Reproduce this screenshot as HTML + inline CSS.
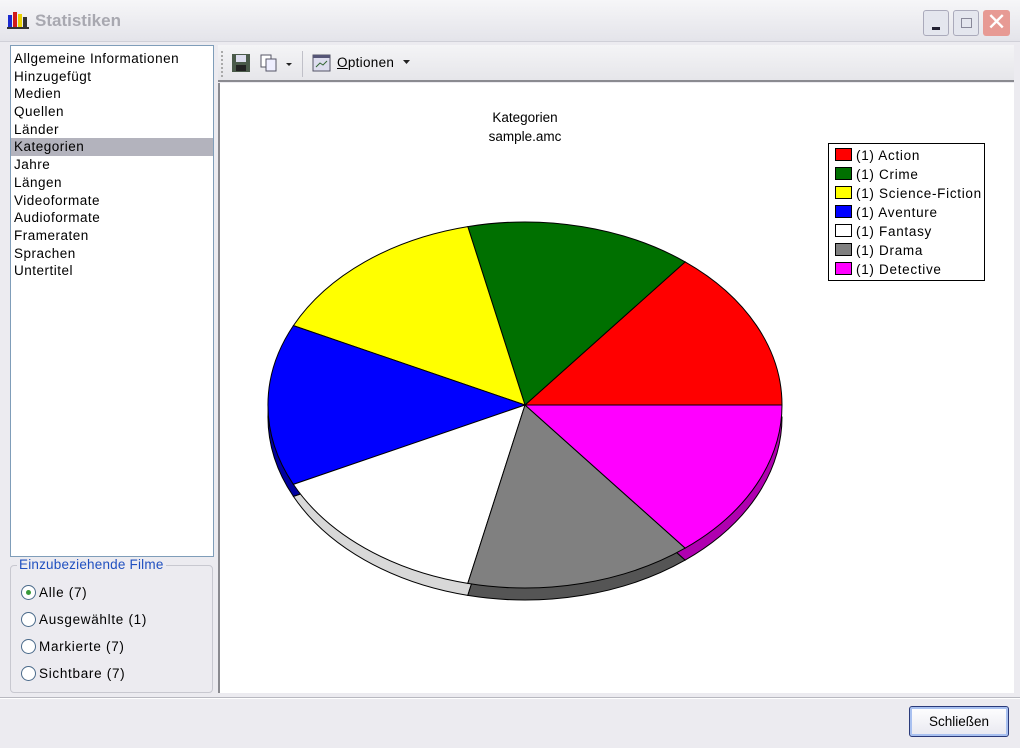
<!DOCTYPE html>
<html><head><meta charset="utf-8"><style>
*{margin:0;padding:0;box-sizing:border-box}
body{width:1020px;height:748px;overflow:hidden;background:#ecebf0;font-family:"Liberation Sans",sans-serif;font-size:13px;color:#000;position:relative}
.abs{position:absolute}
#title{left:0;top:0;width:1020px;height:42px;background:linear-gradient(#f6f6f8,#e4e4ea);border-bottom:1px solid #d0d0d8}
#list{left:10px;top:45px;width:204px;height:512px;background:#fff;border:1px solid #7f9db9}
#list div{height:17.7px;line-height:17.7px;padding-left:3px;font-size:13.5px;letter-spacing:0.5px}
#list .sel{background:#b3b3bd}
#grp{left:10px;top:565px;width:203px;height:128px;border:1px solid #c8c8d0;border-radius:4px}
.rad{position:absolute;left:10px;font-size:13.5px;line-height:16px;letter-spacing:0.7px}
.rad i{display:inline-block;width:15px;height:15px;border:1px solid #4a6a8a;border-radius:50%;background:#fff;vertical-align:-3px;margin-right:3px;position:relative}
.rad i.on:after{content:"";position:absolute;left:4px;top:4px;width:5px;height:5px;border-radius:50%;background:#3a9a3a}
#tb{left:218px;top:45px;width:796px;height:37px;background:linear-gradient(#f4f4f6,#e6e6ea);border-bottom:2px solid #8a8a90}
#chart{left:218px;top:83px;width:796px;height:610px;background:#fff;border-left:2px solid #8a8a90}
</style></head><body>
<div id="title" class="abs">
 <svg class="abs" style="left:7px;top:10px" width="22" height="20"><rect x="1" y="5" width="4" height="13" fill="#1a2ad0"/><rect x="6" y="2" width="4" height="16" fill="#d01a1a"/><rect x="11" y="4" width="4" height="14" fill="#e8d000"/><rect x="16" y="7" width="4" height="11" fill="#333"/><rect x="0" y="17" width="22" height="2" fill="#333"/></svg>
 <div class="abs" style="left:35px;top:11px;font-size:17px;font-weight:bold;color:#a8a8b0">Statistiken</div>
 <div class="abs" style="left:923px;top:10px;width:26px;height:26px;border:1px solid #aab;border-radius:3px;background:#e4e6ee"><div class="abs" style="left:8px;top:16px;width:8px;height:3px;background:#223"></div></div>
 <div class="abs" style="left:953px;top:10px;width:26px;height:26px;border:1px solid #aab;border-radius:3px;background:#e4e6ee"><div class="abs" style="left:7px;top:7px;width:11px;height:10px;border:1px solid #889"></div></div>
 <div class="abs" style="left:983px;top:10px;width:27px;height:26px;border-radius:3px;background:#e79a94;color:#fff;font-size:24px;line-height:25px;text-align:center">✕</div>
</div>
<div id="list" class="abs"><div style="height:4px"></div>
<div>Allgemeine Informationen</div><div>Hinzugefügt</div><div>Medien</div><div>Quellen</div><div>Länder</div><div class="sel">Kategorien</div><div>Jahre</div><div>Längen</div><div>Videoformate</div><div>Audioformate</div><div>Frameraten</div><div>Sprachen</div><div>Untertitel</div></div>
<div id="grp" class="abs">
 <div class="abs" style="left:6px;top:-9px;background:#ecebf0;color:#2050c0;font-size:13.5px;padding:0 2px;letter-spacing:0.2px">Einzubeziehende Filme</div>
 <div class="rad" style="top:19px"><i class="on"></i>Alle (7)</div>
 <div class="rad" style="top:46px"><i></i>Ausgewählte (1)</div>
 <div class="rad" style="top:73px"><i></i>Markierte (7)</div>
 <div class="rad" style="top:100px"><i></i>Sichtbare (7)</div>
</div>
<div id="tb" class="abs">
 <div class="abs" style="left:3px;top:6px;height:26px;border-left:2px dotted #aaa"></div>
 <svg class="abs" style="left:13px;top:8px" width="20" height="20"><rect x="1" y="1" width="18" height="18" fill="#4a5a4a"/><rect x="5" y="2" width="10" height="7" fill="#dde"/><rect x="5" y="12" width="10" height="6" fill="#222"/></svg>
 <svg class="abs" style="left:42px;top:8px" width="32" height="20"><rect x="1" y="2" width="10" height="12" fill="#fff" stroke="#556"/><rect x="6" y="6" width="10" height="12" fill="#eef" stroke="#556"/><path d="M26 10h6l-3 3z" fill="#222"/></svg>
 <div class="abs" style="left:84px;top:6px;height:26px;border-left:1px solid #c0c0c8"></div>
 <svg class="abs" style="left:94px;top:8px" width="20" height="20"><rect x="1" y="2" width="17" height="16" fill="#dde" stroke="#556"/><rect x="1" y="2" width="17" height="3" fill="#557"/><path d="M4 14l4-4 3 2 4-4" stroke="#363" fill="none"/></svg>
 <div class="abs" style="left:119px;top:10px;font-size:13.5px;letter-spacing:0.3px"><u>O</u>ptionen</div>
 <svg class="abs" style="left:185px;top:15px" width="8" height="5"><path d="M0 0h7l-3.5 4z" fill="#222"/></svg>
</div>
<div id="chart" class="abs"></div>
<svg class="abs" style="left:0;top:0" width="1020" height="748">
<text x="525" y="122" text-anchor="middle" font-size="13.5" font-family="Liberation Sans">Kategorien</text>
<text x="525" y="141" text-anchor="middle" font-size="13.5" font-family="Liberation Sans">sample.amc</text>
<g stroke="#000" stroke-width="1" transform="translate(0,12)">
<path d="M525 405L293.4 484.4A257 183 0 0 0 467.8 583.4Z" fill="#d8d8d8"/>
<path d="M525 405L467.8 583.4A257 183 0 0 0 685.2 548.1Z" fill="#555"/>
<path d="M525 405L685.2 548.1A257 183 0 0 0 782 405Z" fill="#b000b0"/>
<path d="M525 405L293.4 325.6A257 183 0 0 0 293.4 484.4Z" fill="#0000a0"/>
</g>
<g stroke="#000" stroke-width="1">
<path d="M525 405L782 405A257 183 0 0 0 685.2 261.9Z" fill="#f00"/>
<path d="M525 405L685.2 261.9A257 183 0 0 0 467.8 226.6Z" fill="#007000"/>
<path d="M525 405L467.8 226.6A257 183 0 0 0 293.4 325.6Z" fill="#ff0"/>
<path d="M525 405L293.4 325.6A257 183 0 0 0 293.4 484.4Z" fill="#00f"/>
<path d="M525 405L293.4 484.4A257 183 0 0 0 467.8 583.4Z" fill="#fff"/>
<path d="M525 405L467.8 583.4A257 183 0 0 0 685.2 548.1Z" fill="#808080"/>
<path d="M525 405L685.2 548.1A257 183 0 0 0 782 405Z" fill="#f0f"/>
</g>
<rect x="828.5" y="143.5" width="156" height="137" fill="#fff" stroke="#000"/>
<g font-size="13.5" font-family="Liberation Sans" stroke-width="1" letter-spacing="0.7">
<rect x="835.5" y="148.5" width="16" height="12" fill="#f00" stroke="#000"/><text x="856" y="160">(1) Action</text>
<rect x="835.5" y="167.5" width="16" height="12" fill="#007000" stroke="#000"/><text x="856" y="179">(1) Crime</text>
<rect x="835.5" y="186.5" width="16" height="12" fill="#ff0" stroke="#000"/><text x="856" y="198">(1) Science-Fiction</text>
<rect x="835.5" y="205.5" width="16" height="12" fill="#00f" stroke="#000"/><text x="856" y="217">(1) Aventure</text>
<rect x="835.5" y="224.5" width="16" height="12" fill="#fff" stroke="#000"/><text x="856" y="236">(1) Fantasy</text>
<rect x="835.5" y="243.5" width="16" height="12" fill="#808080" stroke="#000"/><text x="856" y="255">(1) Drama</text>
<rect x="835.5" y="262.5" width="16" height="12" fill="#f0f" stroke="#000"/><text x="856" y="274">(1) Detective</text>
</g>
</svg>
<div class="abs" style="left:0;top:697px;width:1020px;height:2px;border-top:1px solid #b8b8c0;border-bottom:1px solid #fff"></div>
<div class="abs" style="left:909px;top:706px;width:100px;height:31px;border:1px solid #2a3a7a;border-radius:3px;background:linear-gradient(#fff,#e8e8f0);box-shadow:inset 0 0 0 2px #a8c0f0;text-align:center;line-height:29px;font-size:13.5px">Schließen</div>
</body></html>
